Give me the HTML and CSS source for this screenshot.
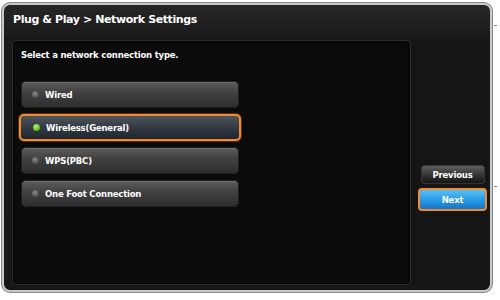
FILE: index.html
```html
<!DOCTYPE html>
<html lang="en">
<head>
    <meta charset="UTF-8">
    <title>Plug &amp; Play - Network Settings</title>
    <link rel="stylesheet" href="styles.css">
</head>
<body>
    <div class="page">
        <div class="window">
            <h1 class="title">Plug &amp; Play &gt; Network Settings</h1>
            <div class="content">
                <div class="panel">
                    <p class="prompt">Select a network connection type.</p>
                    <div class="options">
                        <button class="option"><span class="led"></span>Wired</button>
                        <button class="option selected"><span class="led on"></span>Wireless(General)</button>
                        <button class="option"><span class="led"></span>WPS(PBC)</button>
                        <button class="option"><span class="led"></span>One Foot Connection</button>
                    </div>
                </div>
                <div class="side">
                    <button class="nav prev">Previous</button>
                    <button class="nav next">Next</button>
                </div>
            </div>
        </div>
        <div class="ticks">
            <span class="tick t1"></span>
            <span class="tick t2"></span>
        </div>
    </div>
</body>
</html>
```

FILE: styles.css
```css
body {
    margin: 0;
    background-color: #fff;
    font-family: "DejaVu Sans", Verdana, sans-serif;
    color: #fff;
}
.page {
    display: flex;
    width: 500px;
    height: 300px;
    padding: 3px 0 0 2px;
    box-sizing: border-box;
}
.window {
    width: 490px;
    height: 289px;
    box-sizing: border-box;
    background-color: #181818;
    background-image: linear-gradient(#262626, #1a1a1a 34px, #161616);
    border: 2px solid #c8c8c8;
    box-shadow: 0 0 0 1px #888;
    border-radius: 8px;
    padding: 0 2px 5px 8px;
    display: flex;
    flex-direction: column;
}
.title {
    margin: 0;
    height: 35px;
    line-height: 30px;
    font-size: 11px;
    font-weight: bold;
    letter-spacing: -0.4px;
    padding-left: 1px;
}
.content {
    flex: 1;
    display: flex;
}
.panel {
    width: 399px;
    box-sizing: border-box;
    background-color: #0b0b0b;
    border: 1px solid #2c2c2c;
    border-radius: 4px;
    box-shadow: inset 0 0 0 1px #050505;
    padding: 8px 0 0 8px;
}
.prompt {
    margin: 0;
    font-size: 8.5px;
    font-weight: bold;
    letter-spacing: -0.2px;
    line-height: 12px;
}
.options {
    display: flex;
    flex-direction: column;
    gap: 6px;
    margin-top: 20px;
    width: 218px;
}
.option {
    display: flex;
    align-items: center;
    height: 27px;
    padding: 0 0 0 10px;
    border: 1px solid #1e1e1e;
    border-radius: 5px;
    background-image: linear-gradient(#5c5c5c, #404040 45%, #2e2e2e);
    box-shadow: inset 0 1px 0 #6e6e6e;
    color: #fff;
    font-family: "DejaVu Sans", Verdana, sans-serif;
    font-size: 8.5px;
    font-weight: bold;
    letter-spacing: -0.2px;
    text-align: left;
}
.option.selected {
    height: 27px;
    margin: 0 -2px;
    padding-left: 12px;
    border: 2px solid #ef8a35;
    background-image: linear-gradient(#4c545c, #343a42 50%, #1e2630);
    box-shadow: 0 0 0 1px #5a3010;
}
.led {
    width: 7px;
    height: 7px;
    border-radius: 50%;
    margin-right: 6px;
    background: radial-gradient(circle at 40% 35%, #8a8a8a, #4e4e4e 70%);
}
.led.on {
    background: radial-gradient(circle at 40% 35%, #b8f070, #5cc223 60%, #3d8d14);
}
.side {
    flex: 1;
    display: flex;
    flex-direction: column;
    align-items: center;
    gap: 4px;
    padding: 125px 0 0 6px;
    background-color: #151515;
}
.nav {
    width: 64px;
    height: 19px;
    border-radius: 4px;
    color: #fff;
    font-family: "DejaVu Sans", Verdana, sans-serif;
    font-size: 8.5px;
    font-weight: bold;
    letter-spacing: -0.2px;
    padding: 0;
}
.prev {
    border: 1px solid #333;
    background-image: linear-gradient(#5e5e5e, #3a3a3a 45%, #141414);
}
.next {
    width: 69px;
    height: 23px;
    border: 2px solid #ef8a35;
    background-image: linear-gradient(#58c0f4, #2a9de8 50%, #1674c4);
}
.ticks {
    position: relative;
    flex: 1;
}
.tick {
    position: absolute;
    left: 2px;
    width: 3px;
    height: 1px;
    background-color: #888;
}
.t1 {
    top: 22px;
}
.t2 {
    top: 183px;
}
```
